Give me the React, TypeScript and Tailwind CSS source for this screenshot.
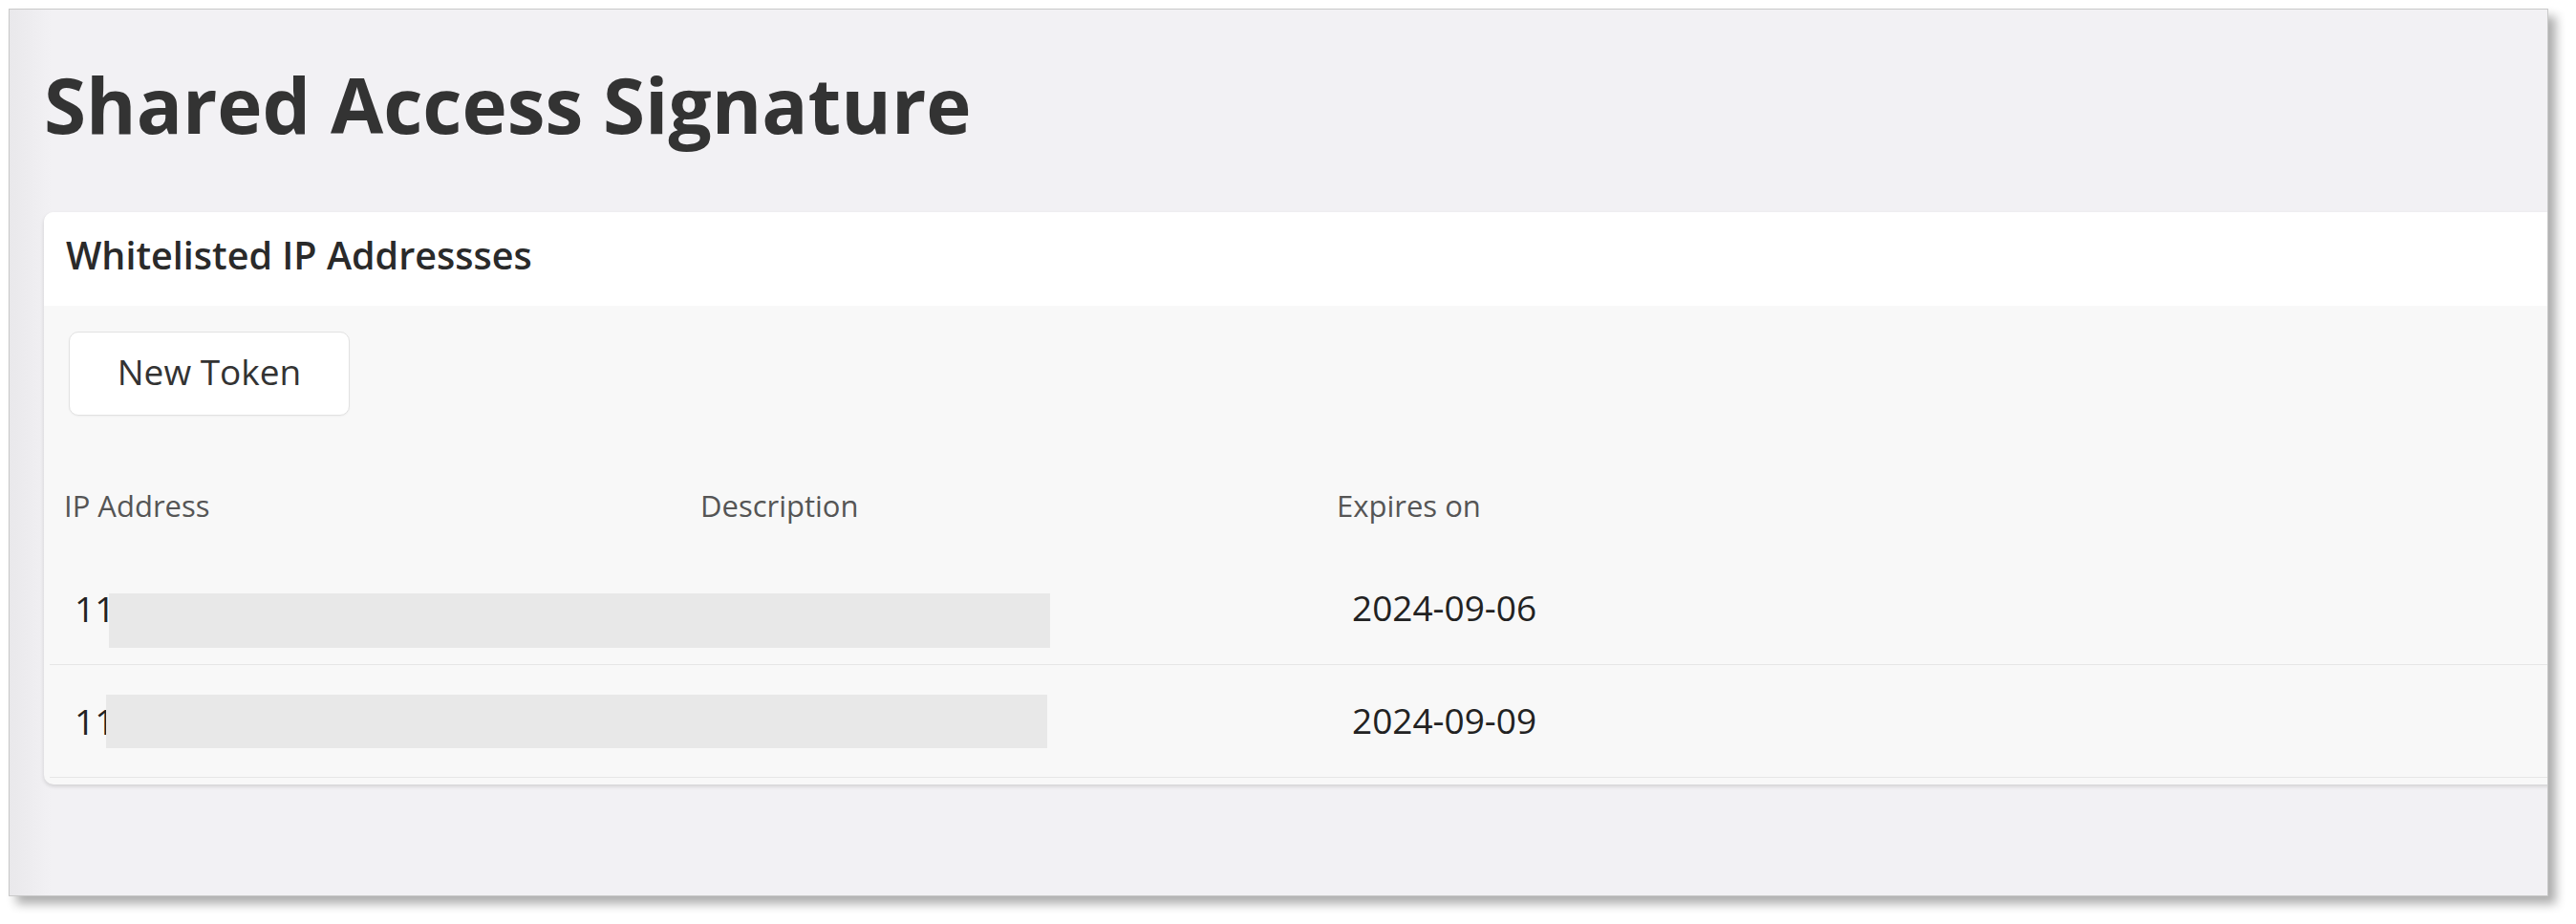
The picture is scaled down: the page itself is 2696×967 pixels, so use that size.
import React from "react";

interface TokenRow {
  ip: string;
  expires: string;
  // redaction box, relative to the row
  mask: { left: number; top: number; width: number; height: number };
}

const rows: TokenRow[] = [
  { ip: "11", expires: "2024-09-06", mask: { left: 62, top: 43, width: 985, height: 57 } },
  { ip: "11", expires: "2024-09-09", mask: { left: 59, top: 31, width: 985, height: 56 } },
];

export default function App() {
  return (
    <div className="w-[2696px] h-[967px] bg-white pt-[9px] pl-[9px] font-['Open_Sans',sans-serif]">
      {/* Window frame */}
      <div className="w-[2658px] h-[929px] overflow-hidden border border-[#c9c9c9] bg-[linear-gradient(to_right,#e9e8eb,#f2f1f4_44px)] shadow-[8px_8px_10px_rgba(0,0,0,0.32)]">
        <div className="pl-[36px] pt-[49px]">
          <h1 className="text-[80px] leading-[100px] font-bold text-[#333333]">
            Shared Access Signature
          </h1>

          {/* Card */}
          <div className="mt-[63px] -mr-[40px] rounded-[10px] overflow-hidden bg-[#f8f8f8] shadow-[0_2px_4px_rgba(0,0,0,0.14)]">
            <div className="h-[98px] bg-white pl-[23px] pt-[18px]">
              <h2 className="text-[39.5px] leading-[54px] font-semibold text-[#2a2a2a]">
                Whitelisted IP Addressses
              </h2>
            </div>

            <div className="pt-[27px] pl-[26px]">
              <button className="w-[294px] h-[88px] flex items-center justify-center pb-[5px] rounded-[10px] border border-[#e2e2e2] bg-white text-[37px] leading-none text-[#333333] shadow-[0_1px_2px_rgba(0,0,0,0.04)]">
                New Token
              </button>
            </div>

            <div className="mt-[60px] ml-[6px] pb-[7px]">
              <div className="grid grid-cols-[666px_666px_666px_1fr] pt-[14px] pb-[29px] text-[31px] leading-[40px] text-[#555555]">
                <div className="pl-[15px]">IP Address</div>
                <div className="pl-[15px]">Description</div>
                <div className="pl-[15px]">Expires on</div>
                <div />
              </div>

              {rows.map((row, i) => (
                <div
                  key={i}
                  className="relative grid grid-cols-[666px_666px_666px_1fr] items-center h-[118px] border-b border-[#e6e6e6] text-[37px] leading-none text-[#222222]"
                >
                  <div className="pl-[26px]">{row.ip}</div>
                  <div />
                  <div className="pl-[31px] -mt-[2px]">{row.expires}</div>
                  <div />
                  <div
                    className="absolute bg-[#e8e8e8]"
                    style={{
                      left: row.mask.left,
                      top: row.mask.top,
                      width: row.mask.width,
                      height: row.mask.height,
                    }}
                  />
                </div>
              ))}
            </div>
          </div>
        </div>
      </div>
    </div>
  );
}
